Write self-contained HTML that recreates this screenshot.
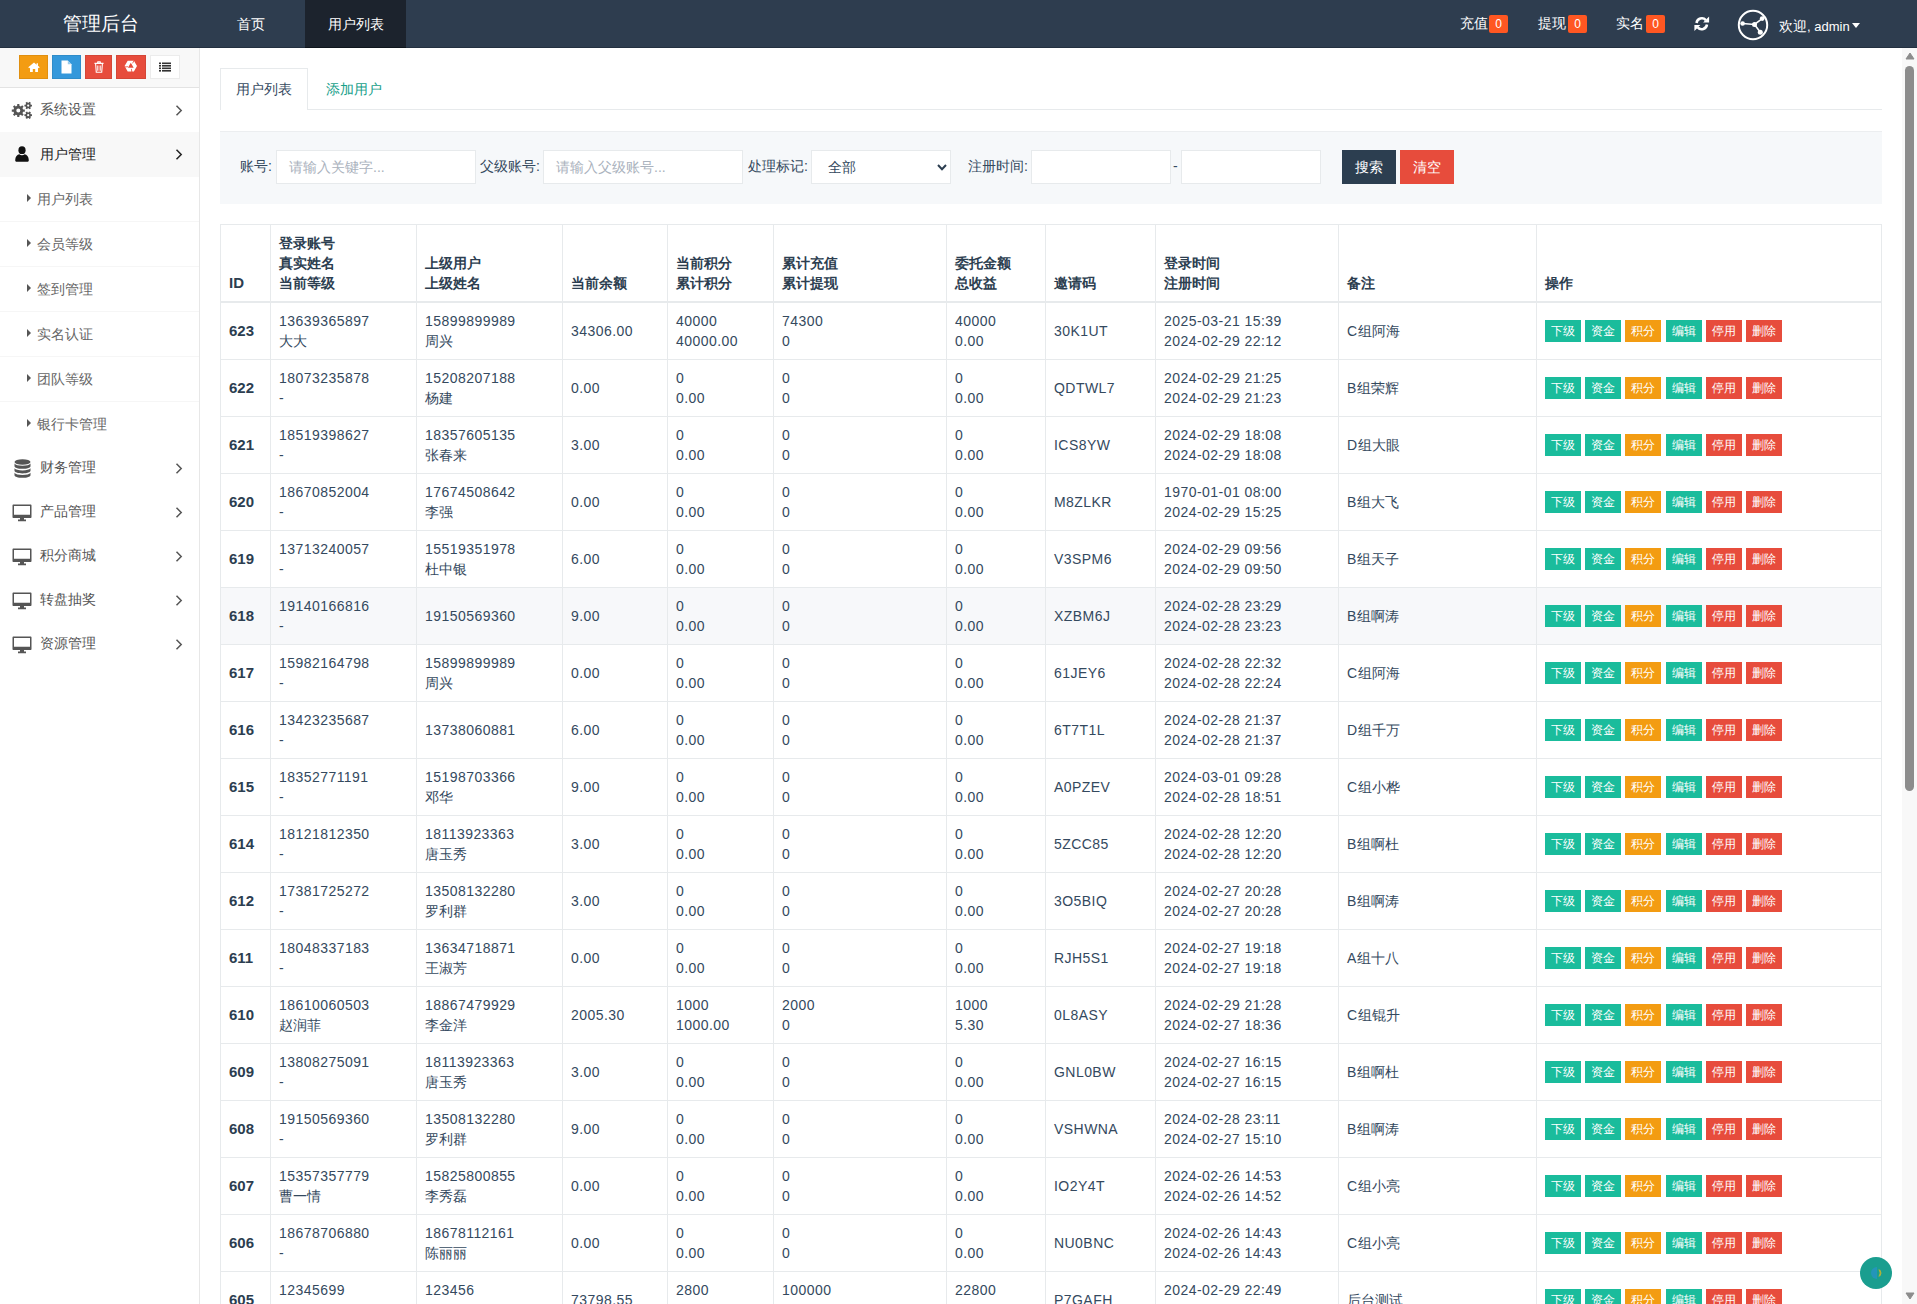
<!DOCTYPE html>
<html><head><meta charset="utf-8">
<style>
*{box-sizing:border-box}
html,body{margin:0;padding:0;width:1917px;height:1304px;overflow:hidden;background:#fff;font-family:"Liberation Sans",sans-serif;font-size:14px;color:#34495e}
.abs{position:absolute}
#hdr{position:absolute;left:0;top:0;width:1917px;height:48px;background:#2e3d4f;border-bottom:1px solid #233040}
#hdr .logo{position:absolute;left:1px;top:0;width:200px;height:47px;line-height:47px;text-align:center;color:#fff;font-size:19px}
#hdr .nav{position:absolute;top:0;height:47px;line-height:47px;color:#fff;font-size:14px;text-align:center}
#hdr .act{background:#1c232d;height:48px;border-bottom:1px solid #0e151c}
#hdr .rt{position:absolute;top:0;height:47px;line-height:47px;color:#fff;font-size:14px}
.badge{display:inline-block;position:absolute;top:15px;width:19px;height:18px;line-height:18px;background:#ff5722;color:#fff;border-radius:2px;font-size:12px;text-align:center}
#side{position:absolute;left:0;top:48px;width:200px;height:1256px;background:#fff;border-right:1px solid #e7e7e7}
#tool{position:absolute;left:0;top:0;width:199px;height:40px;background:#f8f8f8;border-bottom:1px solid #e3e3e3}
#tool .tb{position:absolute;top:7px;height:24px;box-shadow:inset 0 0 0 1px rgba(0,0,0,0.08)}
.mi{position:absolute;left:0;width:199px;height:44px;color:#555;font-size:14px}
.mi .t{position:absolute;left:40px;top:0;line-height:43px}
.mi svg.ic{position:absolute}
.mi .ch{position:absolute;left:175px;top:17px}
.sub{position:absolute;left:0;width:199px;height:45px;border-bottom:1px solid #f6f6f6;color:#666}
.sub .t{position:absolute;left:37px;top:0;line-height:44px}
.sub .tri{position:absolute;left:27px;top:17px;width:0;height:0;border-top:4px solid transparent;border-bottom:4px solid transparent;border-left:4px solid #555}
#main{position:absolute;left:200px;top:48px;width:1702px;height:1256px;background:#fff;overflow:hidden}
#sb{position:absolute;left:1902px;top:48px;width:15px;height:1256px;background:#f8f8f8}
</style></head><body>
<div id="hdr">
  <div class="logo">管理后台</div>
  <div class="nav" style="left:198px;width:105px;top:1px">首页</div>
  <div class="nav act" style="left:305px;width:101px;padding-top:1px">用户列表</div>
  <div class="rt" style="left:1460px;top:0px">充值</div><span class="badge" style="left:1489px">0</span>
  <div class="rt" style="left:1538px;top:0px">提现</div><span class="badge" style="left:1568px">0</span>
  <div class="rt" style="left:1616px;top:0px">实名</div><span class="badge" style="left:1646px">0</span>
  <svg class="abs" style="left:1694px;top:15.5px" width="15.5" height="15.5" viewBox="0 0 16 16"><g fill="none" stroke="#fff" stroke-width="2.6"><path d="M2.6 7.2 A5.5 5.5 0 0 1 12.2 4.3"/><path d="M13.4 8.8 A5.5 5.5 0 0 1 3.8 11.7"/></g><path fill="#fff" d="M15.6 0.6 L15.6 6.8 L9.4 6.8 Z M0.4 15.4 L0.4 9.2 L6.6 9.2 Z"/></svg>
  <svg class="abs" style="left:1737px;top:9px" width="32" height="32" viewBox="0 0 32 32"><circle cx="16" cy="16" r="14.2" fill="none" stroke="#fff" stroke-width="2"/><path d="M5.6 14.5 L17.5 15.5 L25.2 9.6 M17.5 15.5 L23.3 23.3" stroke="#fff" stroke-width="1.6" fill="none"/><circle cx="5.6" cy="14.5" r="2.3" fill="#fff"/><circle cx="17.5" cy="15.5" r="2.5" fill="#fff"/><circle cx="25.2" cy="9.6" r="2.4" fill="#fff"/><circle cx="23.3" cy="23.3" r="2.5" fill="#fff"/></svg>
  <div class="rt" style="left:1779px;top:3px;font-size:14px">欢迎<span style="font-size:13px">, admin</span></div>
  <div class="abs" style="left:1852px;top:23px;width:0;height:0;border-left:4px solid transparent;border-right:4px solid transparent;border-top:5px solid #fff"></div>
</div>
<div id="side">
  <div id="tool">
    <div class="tb" style="left:19px;width:29px;background:#f39c12"><svg class="abs" style="left:8.5px;top:6.5px" width="12" height="10.5" viewBox="0 0 13 12" preserveAspectRatio="none"><path fill="#fff" d="M6.5 0.5 L0.3 6 L1.3 7 L2.2 6.2 L2.2 11.5 L5.2 11.5 L5.2 8 L7.8 8 L7.8 11.5 L10.8 11.5 L10.8 6.2 L11.7 7 L12.7 6 L10.8 4.3 L10.8 1.5 L9.3 1.5 L9.3 3 Z"/></svg></div>
    <div class="tb" style="left:52px;width:29px;background:#3498db"><svg class="abs" style="left:9px;top:5px" width="11" height="14" viewBox="0 0 11 14"><path fill="#fff" d="M0.5 0.5 L6.8 0.5 L10.5 4.2 L10.5 13.5 L0.5 13.5 Z"/><path fill="#3498db" d="M6.8 0.8 L6.8 4.2 L10.2 4.2 Z" opacity="0.5"/></svg></div>
    <div class="tb" style="left:85px;width:27px;background:#e74c3c"><svg class="abs" style="left:8.5px;top:6px" width="10" height="12" viewBox="0 0 11 13" preserveAspectRatio="none"><path fill="none" stroke="#fff" stroke-width="1.2" d="M1.8 3.2 L2.5 12.2 L8.5 12.2 L9.2 3.2 M0.5 2.6 L10.5 2.6 M3.8 2.6 L4.2 0.9 L6.8 0.9 L7.2 2.6 M4.2 5 L4.2 10.5 M6.8 5 L6.8 10.5"/></svg></div>
    <div class="tb" style="left:116px;width:30px;background:#e74c3c"><svg class="abs" style="left:7px;top:4px" width="15" height="15" viewBox="0 0 15 15"><path fill="#fff" fill-rule="evenodd" d="M14.00 7.10 L10.90 12.47 L4.70 12.47 L1.60 7.10 L4.70 1.73 L10.90 1.73 Z M7.80 3.80 L10.66 8.75 L4.94 8.75 Z"/><path d="M11.0 1.5 L9.6 4.3 M2.0 7.9 L5.0 7.7 M8.8 13.3 L8.4 9.9" stroke="#e74c3c" stroke-width="0.8"/></svg></div>
    <div class="tb" style="left:150px;width:30px;background:#fff;box-shadow:inset 0 0 0 1px #ececec"><svg class="abs" style="left:9px;top:6.5px" width="12" height="10" viewBox="0 0 12 10"><g fill="#333"><rect x="0" y="0.5" width="2" height="1.6"/><rect x="3" y="0.5" width="9" height="1.6"/><rect x="0" y="3" width="2" height="1.6"/><rect x="3" y="3" width="9" height="1.6"/><rect x="0" y="5.5" width="2" height="1.6"/><rect x="3" y="5.5" width="9" height="1.6"/><rect x="0" y="8" width="2" height="1.6"/><rect x="3" y="8" width="9" height="1.6"/></g></svg></div>
  </div>
  <div class="mi" style="top:40px">
    <svg class="ic" style="left:11px;top:12px" width="22" height="20" viewBox="0 0 22 20"><path fill="#555" fill-rule="evenodd" d="M12.06 9.44 L13.82 9.56 L13.82 11.64 L12.06 11.76 L11.49 13.14 L12.64 14.48 L11.18 15.94 L9.84 14.79 L8.46 15.36 L8.34 17.12 L6.26 17.12 L6.14 15.36 L4.76 14.79 L3.42 15.94 L1.96 14.48 L3.11 13.14 L2.54 11.76 L0.78 11.64 L0.78 9.56 L2.54 9.44 L3.11 8.06 L1.96 6.72 L3.42 5.26 L4.76 6.41 L6.14 5.84 L6.26 4.08 L8.34 4.08 L8.46 5.84 L9.84 6.41 L11.18 5.26 L12.64 6.72 L11.49 8.06 Z M9.30 10.60 A2.0 2.0 0 1 0 5.30 10.60 A2.0 2.0 0 1 0 9.30 10.60 Z M19.83 4.65 L20.99 4.69 L20.99 6.51 L19.83 6.55 L19.34 7.41 L19.89 8.43 L18.30 9.34 L17.70 8.36 L16.70 8.36 L16.10 9.34 L14.51 8.43 L15.06 7.41 L14.57 6.55 L13.41 6.51 L13.41 4.69 L14.57 4.65 L15.06 3.79 L14.51 2.77 L16.10 1.86 L16.70 2.84 L17.70 2.84 L18.30 1.86 L19.89 2.77 L19.34 3.79 Z M18.30 5.60 A1.1 1.1 0 1 0 16.10 5.60 A1.1 1.1 0 1 0 18.30 5.60 Z M19.83 14.25 L20.99 14.29 L20.99 16.11 L19.83 16.15 L19.34 17.01 L19.89 18.03 L18.30 18.94 L17.70 17.96 L16.70 17.96 L16.10 18.94 L14.51 18.03 L15.06 17.01 L14.57 16.15 L13.41 16.11 L13.41 14.29 L14.57 14.25 L15.06 13.39 L14.51 12.37 L16.10 11.46 L16.70 12.44 L17.70 12.44 L18.30 11.46 L19.89 12.37 L19.34 13.39 Z M18.30 15.20 A1.1 1.1 0 1 0 16.10 15.20 A1.1 1.1 0 1 0 18.30 15.20 Z"/></svg>
    <span class="t">系统设置</span>
    <svg class="ch" width="8" height="11" viewBox="0 0 8 11"><path d="M1.5 0.8 L6.2 5.5 L1.5 10.2" stroke="#555" stroke-width="1.5" fill="none"/></svg>
  </div>
  <div class="mi" style="top:84px;height:45px;background:#f8f8f8;color:#222">
    <svg class="ic" style="left:15px;top:14px" width="14" height="16" viewBox="0 0 14 16"><g fill="#111"><ellipse cx="7" cy="4.2" rx="3.6" ry="3.9"/><path d="M0.2 14.2 C0.2 10.5 2.3 8.6 4.3 8.3 C5 8.9 6 9.2 7 9.2 C8 9.2 9 8.9 9.7 8.3 C11.7 8.6 13.8 10.5 13.8 14.2 C13.8 15.3 13 15.8 12 15.8 L2 15.8 C1 15.8 0.2 15.3 0.2 14.2 Z"/></g></svg>
    <span class="t" style="line-height:45px">用户管理</span>
    <svg class="ch" width="8" height="11" viewBox="0 0 8 11"><path d="M1.5 0.8 L6.2 5.5 L1.5 10.2" stroke="#222" stroke-width="1.5" fill="none"/></svg>
  </div>
  <div class="sub" style="top:129px"><i class="tri"></i><span class="t">用户列表</span></div>
  <div class="sub" style="top:174px"><i class="tri"></i><span class="t">会员等级</span></div>
  <div class="sub" style="top:219px"><i class="tri"></i><span class="t">签到管理</span></div>
  <div class="sub" style="top:264px"><i class="tri"></i><span class="t">实名认证</span></div>
  <div class="sub" style="top:309px"><i class="tri"></i><span class="t">团队等级</span></div>
  <div class="sub" style="top:354px;border-bottom:0"><i class="tri"></i><span class="t">银行卡管理</span></div>
  <div class="mi" style="top:398px">
    <svg class="ic" style="left:14px;top:13px" width="17" height="19" viewBox="0 0 17 19"><g fill="#555"><ellipse cx="8.5" cy="3" rx="8" ry="2.8"/><path d="M0.5 4.6 C1.5 6 4.5 6.8 8.5 6.8 C12.5 6.8 15.5 6 16.5 4.6 L16.5 7.2 C16.5 8.7 13 9.8 8.5 9.8 C4 9.8 0.5 8.7 0.5 7.2 Z"/><path d="M0.5 9.2 C1.5 10.6 4.5 11.4 8.5 11.4 C12.5 11.4 15.5 10.6 16.5 9.2 L16.5 11.8 C16.5 13.3 13 14.4 8.5 14.4 C4 14.4 0.5 13.3 0.5 11.8 Z"/><path d="M0.5 13.8 C1.5 15.2 4.5 16 8.5 16 C12.5 16 15.5 15.2 16.5 13.8 L16.5 16.2 C16.5 17.7 13 18.8 8.5 18.8 C4 18.8 0.5 17.7 0.5 16.2 Z"/></g></svg>
    <span class="t">财务管理</span>
    <svg class="ch" width="8" height="11" viewBox="0 0 8 11"><path d="M1.5 0.8 L6.2 5.5 L1.5 10.2" stroke="#555" stroke-width="1.5" fill="none"/></svg>
  </div>
  <div class="mi" style="top:442px">
    <svg class="ic" style="left:12px;top:14px" width="20" height="18" viewBox="0 0 20 18"><g fill="#555"><path d="M1.5 0.5 L18.5 0.5 C19.1 0.5 19.5 0.9 19.5 1.5 L19.5 13 C19.5 13.6 19.1 14 18.5 14 L12 14 L12 15.5 L14 15.5 L14 17.3 L6 17.3 L6 15.5 L8 15.5 L8 14 L1.5 14 C0.9 14 0.5 13.6 0.5 13 L0.5 1.5 C0.5 0.9 0.9 0.5 1.5 0.5 Z M2 2 L2 10.8 L18 10.8 L18 2 Z"/></g></svg>
    <span class="t">产品管理</span>
    <svg class="ch" width="8" height="11" viewBox="0 0 8 11"><path d="M1.5 0.8 L6.2 5.5 L1.5 10.2" stroke="#555" stroke-width="1.5" fill="none"/></svg>
  </div>
  <div class="mi" style="top:486px">
    <svg class="ic" style="left:12px;top:14px" width="20" height="18" viewBox="0 0 20 18"><g fill="#555"><path d="M1.5 0.5 L18.5 0.5 C19.1 0.5 19.5 0.9 19.5 1.5 L19.5 13 C19.5 13.6 19.1 14 18.5 14 L12 14 L12 15.5 L14 15.5 L14 17.3 L6 17.3 L6 15.5 L8 15.5 L8 14 L1.5 14 C0.9 14 0.5 13.6 0.5 13 L0.5 1.5 C0.5 0.9 0.9 0.5 1.5 0.5 Z M2 2 L2 10.8 L18 10.8 L18 2 Z"/></g></svg>
    <span class="t">积分商城</span>
    <svg class="ch" width="8" height="11" viewBox="0 0 8 11"><path d="M1.5 0.8 L6.2 5.5 L1.5 10.2" stroke="#555" stroke-width="1.5" fill="none"/></svg>
  </div>
  <div class="mi" style="top:530px">
    <svg class="ic" style="left:12px;top:14px" width="20" height="18" viewBox="0 0 20 18"><g fill="#555"><path d="M1.5 0.5 L18.5 0.5 C19.1 0.5 19.5 0.9 19.5 1.5 L19.5 13 C19.5 13.6 19.1 14 18.5 14 L12 14 L12 15.5 L14 15.5 L14 17.3 L6 17.3 L6 15.5 L8 15.5 L8 14 L1.5 14 C0.9 14 0.5 13.6 0.5 13 L0.5 1.5 C0.5 0.9 0.9 0.5 1.5 0.5 Z M2 2 L2 10.8 L18 10.8 L18 2 Z"/></g></svg>
    <span class="t">转盘抽奖</span>
    <svg class="ch" width="8" height="11" viewBox="0 0 8 11"><path d="M1.5 0.8 L6.2 5.5 L1.5 10.2" stroke="#555" stroke-width="1.5" fill="none"/></svg>
  </div>
  <div class="mi" style="top:574px">
    <svg class="ic" style="left:12px;top:14px" width="20" height="18" viewBox="0 0 20 18"><g fill="#555"><path d="M1.5 0.5 L18.5 0.5 C19.1 0.5 19.5 0.9 19.5 1.5 L19.5 13 C19.5 13.6 19.1 14 18.5 14 L12 14 L12 15.5 L14 15.5 L14 17.3 L6 17.3 L6 15.5 L8 15.5 L8 14 L1.5 14 C0.9 14 0.5 13.6 0.5 13 L0.5 1.5 C0.5 0.9 0.9 0.5 1.5 0.5 Z M2 2 L2 10.8 L18 10.8 L18 2 Z"/></g></svg>
    <span class="t">资源管理</span>
    <svg class="ch" width="8" height="11" viewBox="0 0 8 11"><path d="M1.5 0.8 L6.2 5.5 L1.5 10.2" stroke="#555" stroke-width="1.5" fill="none"/></svg>
  </div>
</div>
<style>
#tabs{position:absolute;left:20px;top:20px;width:1662px;height:42px;border-bottom:1px solid #e7eaec}
#tabs .a{position:absolute;left:0;top:0;width:88px;height:42px;border:1px solid #e7eaec;border-bottom:0;background:#fff;line-height:40px;text-align:center;color:#34495e;font-size:14px}
#tabs .l{position:absolute;left:106px;top:1px;line-height:40px;color:#18a08a;font-size:14px}
#srch{position:absolute;left:20px;top:83px;width:1662px;height:73px;background:#f6f8fa;border-top:1px solid #eceef0}
#srch .lb{position:absolute;top:0;line-height:68px;color:#34495e;font-size:14px}
#srch .in{position:absolute;top:18px;height:34px;background:#fff;border:1px solid #e7eaec;color:#aab2bd;font-size:14px;line-height:32px;padding-left:12px}
#srch .btn{position:absolute;top:18px;height:34px;line-height:34px;color:#fff;font-size:14px;text-align:center}
table.t{position:absolute;left:20px;top:176px;border-collapse:collapse;table-layout:fixed;width:1661px}
table.t th,table.t td{border:1px solid #e7eaec;padding:8px 8px;line-height:20px;font-size:14px;text-align:left;vertical-align:middle;white-space:nowrap;overflow:hidden}
table.t th{vertical-align:bottom;font-weight:bold;color:#2c3e50;border-bottom:2px solid #e7eaec;height:77px}
table.t td{height:57px;color:#34495e;letter-spacing:0.45px}
table.t td.id{font-weight:bold;color:#2c3e50;font-size:15px;letter-spacing:0}
table.t th:first-child{font-size:15px}
.c{letter-spacing:0}
table.t tr.hl td{background:#f7f8fa}
.b{display:inline-block;font-style:normal;letter-spacing:0;width:36px;height:22px;line-height:22px;text-align:center;color:#fff;font-size:12px;margin-right:4px}
.b.g{background:#1abc9c}.b.o{background:#f39c12}.b.r{background:#e74c3c}
</style>
<div id="main">
  <div id="tabs"><div class="a">用户列表</div><div class="l">添加用户</div></div>
  <div id="srch">
    <span class="lb" style="left:20px">账号:</span>
    <div class="in" style="left:56px;width:200px">请输入关键字...</div>
    <span class="lb" style="left:260px">父级账号:</span>
    <div class="in" style="left:323px;width:200px">请输入父级账号...</div>
    <span class="lb" style="left:528px">处理标记:</span>
    <div class="in" style="left:591px;width:140px;color:#34495e;padding-left:16px">全部<svg class="abs" style="left:125px;top:13px" width="10" height="7" viewBox="0 0 10 7"><path d="M1 1 L5 5.2 L9 1" stroke="#2c3e50" stroke-width="2" fill="none"/></svg></div>
    <span class="lb" style="left:748px">注册时间:</span>
    <div class="in" style="left:811px;width:140px"></div>
    <span class="lb" style="left:953px">-</span>
    <div class="in" style="left:961px;width:140px"></div>
    <div class="btn" style="left:1122px;width:54px;background:#2c3e50">搜索</div>
    <div class="btn" style="left:1180px;width:54px;background:#e74c3c">清空</div>
  </div>
  <table class="t">
    <colgroup><col style="width:50px"><col style="width:146px"><col style="width:146px"><col style="width:105px"><col style="width:106px"><col style="width:173px"><col style="width:99px"><col style="width:110px"><col style="width:183px"><col style="width:198px"><col style="width:345px"></colgroup>
    <thead><tr><th>ID</th><th>登录账号<br>真实姓名<br>当前等级</th><th>上级用户<br>上级姓名</th><th>当前余额</th><th>当前积分<br>累计积分</th><th>累计充值<br>累计提现</th><th>委托金额<br>总收益</th><th>邀请码</th><th>登录时间<br>注册时间</th><th>备注</th><th>操作</th></tr></thead>
    <tbody>
<tr><td class="id">623</td><td>13639365897<br><span class="c">大大</span></td><td>15899899989<br><span class="c">周兴</span></td><td>34306.00</td><td>40000<br>40000.00</td><td>74300<br>0</td><td>40000<br>0.00</td><td>30K1UT</td><td>2025-03-21 15:39<br>2024-02-29 22:12</td><td>C<span class="c">组阿海</span></td><td class="op"><i class="b g">下级</i><i class="b g">资金</i><i class="b o" style="margin-right:5px">积分</i><i class="b g">编辑</i><i class="b r">停用</i><i class="b r">删除</i></td></tr>
<tr><td class="id">622</td><td>18073235878<br>-</td><td>15208207188<br><span class="c">杨建</span></td><td>0.00</td><td>0<br>0.00</td><td>0<br>0</td><td>0<br>0.00</td><td>QDTWL7</td><td>2024-02-29 21:25<br>2024-02-29 21:23</td><td>B<span class="c">组荣辉</span></td><td class="op"><i class="b g">下级</i><i class="b g">资金</i><i class="b o" style="margin-right:5px">积分</i><i class="b g">编辑</i><i class="b r">停用</i><i class="b r">删除</i></td></tr>
<tr><td class="id">621</td><td>18519398627<br>-</td><td>18357605135<br><span class="c">张春来</span></td><td>3.00</td><td>0<br>0.00</td><td>0<br>0</td><td>0<br>0.00</td><td>ICS8YW</td><td>2024-02-29 18:08<br>2024-02-29 18:08</td><td>D<span class="c">组大眼</span></td><td class="op"><i class="b g">下级</i><i class="b g">资金</i><i class="b o" style="margin-right:5px">积分</i><i class="b g">编辑</i><i class="b r">停用</i><i class="b r">删除</i></td></tr>
<tr><td class="id">620</td><td>18670852004<br>-</td><td>17674508642<br><span class="c">李强</span></td><td>0.00</td><td>0<br>0.00</td><td>0<br>0</td><td>0<br>0.00</td><td>M8ZLKR</td><td>1970-01-01 08:00<br>2024-02-29 15:25</td><td>B<span class="c">组大飞</span></td><td class="op"><i class="b g">下级</i><i class="b g">资金</i><i class="b o" style="margin-right:5px">积分</i><i class="b g">编辑</i><i class="b r">停用</i><i class="b r">删除</i></td></tr>
<tr><td class="id">619</td><td>13713240057<br>-</td><td>15519351978<br><span class="c">杜中银</span></td><td>6.00</td><td>0<br>0.00</td><td>0<br>0</td><td>0<br>0.00</td><td>V3SPM6</td><td>2024-02-29 09:56<br>2024-02-29 09:50</td><td>B<span class="c">组天子</span></td><td class="op"><i class="b g">下级</i><i class="b g">资金</i><i class="b o" style="margin-right:5px">积分</i><i class="b g">编辑</i><i class="b r">停用</i><i class="b r">删除</i></td></tr>
<tr class="hl"><td class="id">618</td><td>19140166816<br>-</td><td>19150569360</td><td>9.00</td><td>0<br>0.00</td><td>0<br>0</td><td>0<br>0.00</td><td>XZBM6J</td><td>2024-02-28 23:29<br>2024-02-28 23:23</td><td>B<span class="c">组啊涛</span></td><td class="op"><i class="b g">下级</i><i class="b g">资金</i><i class="b o" style="margin-right:5px">积分</i><i class="b g">编辑</i><i class="b r">停用</i><i class="b r">删除</i></td></tr>
<tr><td class="id">617</td><td>15982164798<br>-</td><td>15899899989<br><span class="c">周兴</span></td><td>0.00</td><td>0<br>0.00</td><td>0<br>0</td><td>0<br>0.00</td><td>61JEY6</td><td>2024-02-28 22:32<br>2024-02-28 22:24</td><td>C<span class="c">组阿海</span></td><td class="op"><i class="b g">下级</i><i class="b g">资金</i><i class="b o" style="margin-right:5px">积分</i><i class="b g">编辑</i><i class="b r">停用</i><i class="b r">删除</i></td></tr>
<tr><td class="id">616</td><td>13423235687<br>-</td><td>13738060881</td><td>6.00</td><td>0<br>0.00</td><td>0<br>0</td><td>0<br>0.00</td><td>6T7T1L</td><td>2024-02-28 21:37<br>2024-02-28 21:37</td><td>D<span class="c">组千万</span></td><td class="op"><i class="b g">下级</i><i class="b g">资金</i><i class="b o" style="margin-right:5px">积分</i><i class="b g">编辑</i><i class="b r">停用</i><i class="b r">删除</i></td></tr>
<tr><td class="id">615</td><td>18352771191<br>-</td><td>15198703366<br><span class="c">邓华</span></td><td>9.00</td><td>0<br>0.00</td><td>0<br>0</td><td>0<br>0.00</td><td>A0PZEV</td><td>2024-03-01 09:28<br>2024-02-28 18:51</td><td>C<span class="c">组小桦</span></td><td class="op"><i class="b g">下级</i><i class="b g">资金</i><i class="b o" style="margin-right:5px">积分</i><i class="b g">编辑</i><i class="b r">停用</i><i class="b r">删除</i></td></tr>
<tr><td class="id">614</td><td>18121812350<br>-</td><td>18113923363<br><span class="c">唐玉秀</span></td><td>3.00</td><td>0<br>0.00</td><td>0<br>0</td><td>0<br>0.00</td><td>5ZCC85</td><td>2024-02-28 12:20<br>2024-02-28 12:20</td><td>B<span class="c">组啊杜</span></td><td class="op"><i class="b g">下级</i><i class="b g">资金</i><i class="b o" style="margin-right:5px">积分</i><i class="b g">编辑</i><i class="b r">停用</i><i class="b r">删除</i></td></tr>
<tr><td class="id">612</td><td>17381725272<br>-</td><td>13508132280<br><span class="c">罗利群</span></td><td>3.00</td><td>0<br>0.00</td><td>0<br>0</td><td>0<br>0.00</td><td>3O5BIQ</td><td>2024-02-27 20:28<br>2024-02-27 20:28</td><td>B<span class="c">组啊涛</span></td><td class="op"><i class="b g">下级</i><i class="b g">资金</i><i class="b o" style="margin-right:5px">积分</i><i class="b g">编辑</i><i class="b r">停用</i><i class="b r">删除</i></td></tr>
<tr><td class="id">611</td><td>18048337183<br>-</td><td>13634718871<br><span class="c">王淑芳</span></td><td>0.00</td><td>0<br>0.00</td><td>0<br>0</td><td>0<br>0.00</td><td>RJH5S1</td><td>2024-02-27 19:18<br>2024-02-27 19:18</td><td>A<span class="c">组十八</span></td><td class="op"><i class="b g">下级</i><i class="b g">资金</i><i class="b o" style="margin-right:5px">积分</i><i class="b g">编辑</i><i class="b r">停用</i><i class="b r">删除</i></td></tr>
<tr><td class="id">610</td><td>18610060503<br><span class="c">赵润菲</span></td><td>18867479929<br><span class="c">李金洋</span></td><td>2005.30</td><td>1000<br>1000.00</td><td>2000<br>0</td><td>1000<br>5.30</td><td>0L8ASY</td><td>2024-02-29 21:28<br>2024-02-27 18:36</td><td>C<span class="c">组锟升</span></td><td class="op"><i class="b g">下级</i><i class="b g">资金</i><i class="b o" style="margin-right:5px">积分</i><i class="b g">编辑</i><i class="b r">停用</i><i class="b r">删除</i></td></tr>
<tr><td class="id">609</td><td>13808275091<br>-</td><td>18113923363<br><span class="c">唐玉秀</span></td><td>3.00</td><td>0<br>0.00</td><td>0<br>0</td><td>0<br>0.00</td><td>GNL0BW</td><td>2024-02-27 16:15<br>2024-02-27 16:15</td><td>B<span class="c">组啊杜</span></td><td class="op"><i class="b g">下级</i><i class="b g">资金</i><i class="b o" style="margin-right:5px">积分</i><i class="b g">编辑</i><i class="b r">停用</i><i class="b r">删除</i></td></tr>
<tr><td class="id">608</td><td>19150569360<br>-</td><td>13508132280<br><span class="c">罗利群</span></td><td>9.00</td><td>0<br>0.00</td><td>0<br>0</td><td>0<br>0.00</td><td>VSHWNA</td><td>2024-02-28 23:11<br>2024-02-27 15:10</td><td>B<span class="c">组啊涛</span></td><td class="op"><i class="b g">下级</i><i class="b g">资金</i><i class="b o" style="margin-right:5px">积分</i><i class="b g">编辑</i><i class="b r">停用</i><i class="b r">删除</i></td></tr>
<tr><td class="id">607</td><td>15357357779<br><span class="c">曹一情</span></td><td>15825800855<br><span class="c">李秀磊</span></td><td>0.00</td><td>0<br>0.00</td><td>0<br>0</td><td>0<br>0.00</td><td>IO2Y4T</td><td>2024-02-26 14:53<br>2024-02-26 14:52</td><td>C<span class="c">组小亮</span></td><td class="op"><i class="b g">下级</i><i class="b g">资金</i><i class="b o" style="margin-right:5px">积分</i><i class="b g">编辑</i><i class="b r">停用</i><i class="b r">删除</i></td></tr>
<tr><td class="id">606</td><td>18678706880<br>-</td><td>18678112161<br><span class="c">陈丽丽</span></td><td>0.00</td><td>0<br>0.00</td><td>0<br>0</td><td>0<br>0.00</td><td>NU0BNC</td><td>2024-02-26 14:43<br>2024-02-26 14:43</td><td>C<span class="c">组小亮</span></td><td class="op"><i class="b g">下级</i><i class="b g">资金</i><i class="b o" style="margin-right:5px">积分</i><i class="b g">编辑</i><i class="b r">停用</i><i class="b r">删除</i></td></tr>
<tr><td class="id">605</td><td>12345699<br>-</td><td>123456<br>-</td><td>73798.55</td><td>2800<br>2800.00</td><td>100000<br>0</td><td>22800<br>0.00</td><td>P7GAFH</td><td>2024-02-29 22:49<br>2024-02-26 14:40</td><td><span class="c">后台测试</span></td><td class="op"><i class="b g">下级</i><i class="b g">资金</i><i class="b o" style="margin-right:5px">积分</i><i class="b g">编辑</i><i class="b r">停用</i><i class="b r">删除</i></td></tr>    </tbody>
  </table>
  <svg class="abs" style="left:1660px;top:1209px" width="32" height="32" viewBox="0 0 32 32"><circle cx="16" cy="16" r="16" fill="#1a9e8f"/><path d="M17 10 A6 6 0 0 0 17 22 Z" fill="#2b8fd6" opacity="0.6"/><path d="M19 12.5 Q21.5 16 19 19.5 M19.8 12.8 Q22.2 16 19.8 19.2" stroke="#c9b52a" stroke-width="0.9" fill="none"/></svg>
</div>
<div id="sb">
  <svg class="abs" style="left:3px;top:4px" width="10" height="8" viewBox="0 0 10 8"><path d="M5 1 L9 7 L1 7 Z" fill="#8c8c8c" stroke="#8c8c8c" stroke-linejoin="round"/></svg>
  <div class="abs" style="left:3px;top:18px;width:9px;height:725px;background:#8c8c8c;border-radius:4.5px"></div>
  <svg class="abs" style="left:3px;top:1244px" width="10" height="8" viewBox="0 0 10 8"><path d="M1 1 L9 1 L5 7 Z" fill="#8c8c8c" stroke="#8c8c8c" stroke-linejoin="round"/></svg>
</div>
</body></html>
